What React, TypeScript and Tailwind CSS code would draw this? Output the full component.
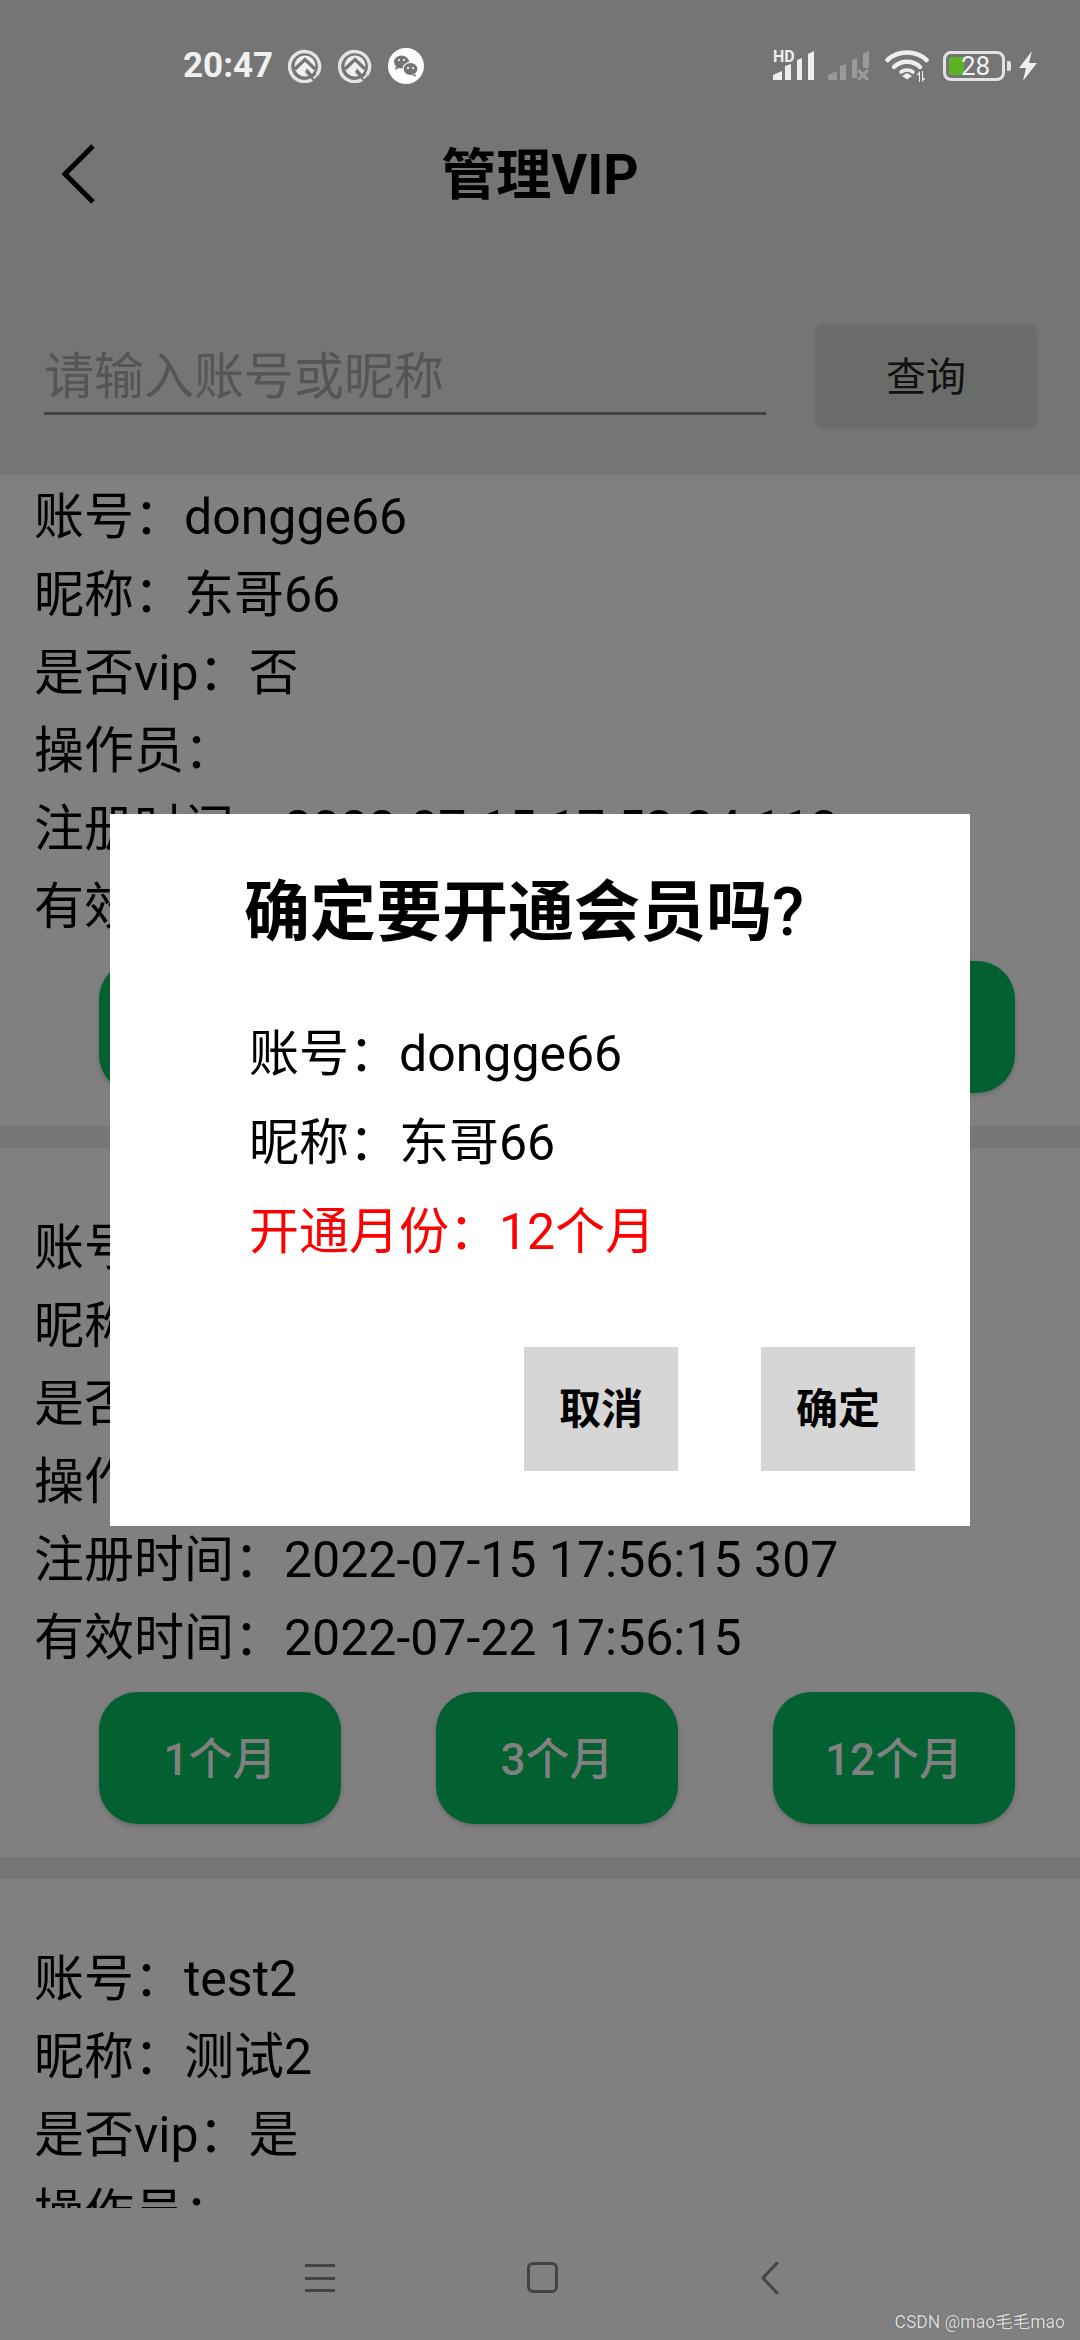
const font = "font-['Roboto','Noto_Sans_CJK_SC',sans-serif]";

const cards = [
  {
    top: "pt-[2px]",
    rows: [
      "账号：dongge66",
      "昵称：东哥66",
      "是否vip：否",
      "操作员：",
      "注册时间：2022-07-15 17:53:34 113",
      "有效时间：2022-07-22 17:53:34",
    ],
  },
  {
    top: "pt-[60px]",
    rows: [
      "账号：dongge55",
      "昵称：东哥55",
      "是否vip：否",
      "操作员：",
      "注册时间：2022-07-15 17:56:15 307",
      "有效时间：2022-07-22 17:56:15",
    ],
  },
];

const lastRows = ["账号：test2", "昵称：测试2", "是否vip：是", "操作员："];

const QIcon = () => (
  <svg width="34" height="34" viewBox="0 0 34 34">
    <circle cx="17" cy="17" r="10.5" fill="#efefef" />
    <path d="M25 30A15 15 0 1 1 29 26" fill="none" stroke="#e4e4e4" strokeWidth="3.400" />
    <path d="M7 20 17 10.500 27 20" fill="none" stroke="#757575" strokeWidth="3.200" />
    <path d="M19 19.500 29 31l-4 1-8-9z" fill="#757575" />
    <path d="M29 26l-3.500 3.500" stroke="#e4e4e4" strokeWidth="2" />
  </svg>
);

const WechatIcon = () => (
  <svg width="36" height="36" viewBox="0 0 36 36">
    <circle cx="18" cy="18" r="18" fill="#fff" />
    <ellipse cx="13.500" cy="14" rx="7.500" ry="6.500" fill="#757575" />
    <path d="M8 18l-1 4 4-2z" fill="#757575" />
    <ellipse cx="22.500" cy="21" rx="7.500" ry="6.500" fill="#757575" stroke="#fff" strokeWidth="1.200" />
    <path d="M27 26l1.500 3-4-1.500z" fill="#757575" />
    <circle cx="11" cy="12" r="1.100" fill="#fff" />
    <circle cx="16" cy="12" r="1.100" fill="#fff" />
    <circle cx="20" cy="20" r="1.100" fill="#fff" />
    <circle cx="25" cy="20" r="1.100" fill="#fff" />
  </svg>
);

const SignalFull = () => (
  <svg width="42" height="30" viewBox="0 0 42 30">
    <path d="M0 29v-5l9-4v9z M12 29V15l6-2v16z M24 29V9l5-2v22z M35 29V3l6-3v29z" fill="#eee" />
  </svg>
);

const SignalOff = () => (
  <svg width="42" height="30" viewBox="0 0 42 30">
    <path d="M0 29v-5l9-4v9z M12 29V15l6-2v16z M24 29V9l5-2v20h-5z M35 17V3l6-3v17z" fill="#9a9a9a" />
    <path d="M30 19l10 10M40 19 30 29" stroke="#9a9a9a" strokeWidth="3.200" />
  </svg>
);

const Wifi = () => (
  <svg width="44" height="32" viewBox="0 0 44 32">
    <path d="M2.500 10C13 0 31 0 41.500 10" fill="none" stroke="#eee" strokeWidth="4.500" strokeLinecap="round" />
    <path d="M9 17C16 10 28 10 35 17" fill="none" stroke="#eee" strokeWidth="4.500" strokeLinecap="round" />
    <path d="M16 22C19.500 19.500 24.500 19.500 28 22" fill="none" stroke="#eee" strokeWidth="3.600" strokeLinecap="round" />
    <path d="M17 26 22 23l5 3-5 3.500z" fill="#eee" />
    <path d="M34 32v-7h-2.500l3.500-4v11z M37 21v11l3.500-4H38v-7z" fill="#eee" />
  </svg>
);

const Battery = () => (
  <div className="flex items-center">
    <div className="relative flex h-[30px] w-[62px] items-center rounded-[8px] border-[3px] border-[#e2e2e2] p-[3px]">
      <div className="h-full w-[15px] rounded-l-[3px] bg-[#5cb321]" />
      <span className="absolute inset-0 pl-[15px] text-[26px] leading-[24px] text-[#f2f2f2]">28</span>
    </div>
    <div className="ml-[2px] h-[10px] w-[4px] rounded-r-[2px] bg-[#e2e2e2]" />
    <svg className="ml-[7px]" width="20" height="30" viewBox="0 0 20 30">
      <path d="M14 0 1 17h7L5 30l14-18h-8z" fill="#eee" />
    </svg>
  </div>
);

const InfoRow = ({ text }: { text: string }) => (
  <p className="h-[78px] text-[50px] leading-[81px] whitespace-nowrap text-black">{text}</p>
);

const MonthButton = ({ label }: { label: string }) => (
  <button className="flex h-[132px] w-[242px] items-center justify-center rounded-[38px] bg-[#036030] pt-[3px] text-[44px] font-medium text-[#808080] shadow-[0_2px_5px_rgba(0,0,0,0.2)]">
    {label}
  </button>
);

const Divider = () => <div className="h-[22px] bg-[#767676]" />;

export default function App() {
  return (
    <div className={`relative flex h-[2340px] w-[1080px] flex-col overflow-hidden bg-[#808080] ${font}`}>
      {/* top part: status bar, title, search */}
      <header className="h-[475px] shrink-0 bg-[#757575]">
        <div className="flex h-[110px] items-start justify-between pt-[46px] pr-[42px] pl-[183px]">
          <div className="flex items-center">
            <span className="w-[88px] text-[35px] leading-[40px] font-bold text-[#f0f0f0]">20:47</span>
            <div className="ml-[17px] flex items-center gap-[16px]">
              <QIcon />
              <QIcon />
              <WechatIcon />
            </div>
          </div>
          <div className="flex items-center pt-[4px]">
            <div className="relative h-[30px] w-[42px]">
              <span className="absolute -top-[1px] left-0 text-[16px] leading-[14px] font-bold text-[#eee]">HD</span>
              <SignalFull />
            </div>
            <div className="ml-[13px]">
              <SignalOff />
            </div>
            <div className="ml-[15px]">
              <Wifi />
            </div>
            <div className="ml-[14px]">
              <Battery />
            </div>
          </div>
        </div>

        <div className="relative flex h-[130px] items-center justify-center">
          <svg className="absolute top-[34px] left-[60px]" width="36" height="60" viewBox="0 0 36 60">
            <path d="M33 2 5 30l28 28" fill="none" stroke="#000" strokeWidth="5" />
          </svg>
          <h1 className="text-[55px] leading-none font-bold text-black">管理VIP</h1>
        </div>

        <div className="mt-[85px] flex items-start pr-[44px] pl-[44px]">
          <div className="h-[90px] w-[722px] border-b-[3px] border-[#444]">
            <p className="text-[50px] leading-[104px] text-[#555]">请输入账号或昵称</p>
          </div>
          <button className="ml-[50px] h-[102px] w-[220px] rounded-[6px] bg-[#6a6c6a] pt-[4px] text-[40px] text-[#111] shadow-[0_1px_3px_rgba(0,0,0,0.15)]">
            查询
          </button>
        </div>
      </header>

      {/* member list */}
      <main className="min-h-0 flex-1 overflow-hidden">
        {cards.map((card) => (
          <div key={card.rows[4]}>
            <section className={`${card.top} pb-[33px]`}>
              <div className="pl-[34px]">
                {card.rows.map((row) => (
                  <InfoRow key={row} text={row} />
                ))}
              </div>
              <div className="mt-[16px] flex gap-[95px] pl-[99px]">
                <MonthButton label="1个月" />
                <MonthButton label="3个月" />
                <MonthButton label="12个月" />
              </div>
            </section>
            <Divider />
          </div>
        ))}
        <section className="pt-[60px] pl-[34px]">
          {lastRows.map((row) => (
            <InfoRow key={row} text={row} />
          ))}
        </section>
      </main>

      {/* navigation keys */}
      <nav className="flex h-[132px] shrink-0 items-start bg-[#808080] pt-[54px] pl-[305px]">
        <div className="mt-[2px] flex h-[28px] w-[30px] flex-col justify-between">
          <div className="h-[3px] bg-[#444]" />
          <div className="h-[3px] bg-[#444]" />
          <div className="h-[3px] bg-[#444]" />
        </div>
        <div className="ml-[192px] h-[31px] w-[31px] rounded-[6px] border-[3px] border-[#444]" />
        <svg className="ml-[203px]" width="18" height="32" viewBox="0 0 18 32">
          <path d="M16 1 2 16l14 15" fill="none" stroke="#444" strokeWidth="3" strokeLinecap="round" />
        </svg>
      </nav>

      {/* confirm dialog */}
      <div className="absolute top-[814px] left-[110px] flex h-[712px] w-[860px] flex-col bg-white pt-[58px]">
        <h2 className="pl-[134px] text-[66px] leading-[82px] font-bold whitespace-nowrap text-black">
          确定要开通会员吗<span className="font-medium">?</span>
        </h2>
        <div className="mt-[56px] pl-[139px] text-[50px] leading-[89px] text-black">
          <p>账号：dongge66</p>
          <p>昵称：东哥66</p>
          <p className="text-[#f00]">开通月份：12个月</p>
        </div>
        <div className="mt-[70px] flex justify-end gap-[83px] pr-[55px]">
          <button className="h-[124px] w-[154px] bg-[#d6d6d6] text-[42px] font-bold text-black">取消</button>
          <button className="h-[124px] w-[154px] bg-[#d6d6d6] text-[42px] font-bold text-black">确定</button>
        </div>
      </div>

      <span className="absolute right-[15px] bottom-[7px] text-[17.5px] leading-[22px] whitespace-nowrap text-[#ddd] [text-shadow:0_0_1px_#333]">
        CSDN @mao毛毛mao
      </span>
    </div>
  );
}
